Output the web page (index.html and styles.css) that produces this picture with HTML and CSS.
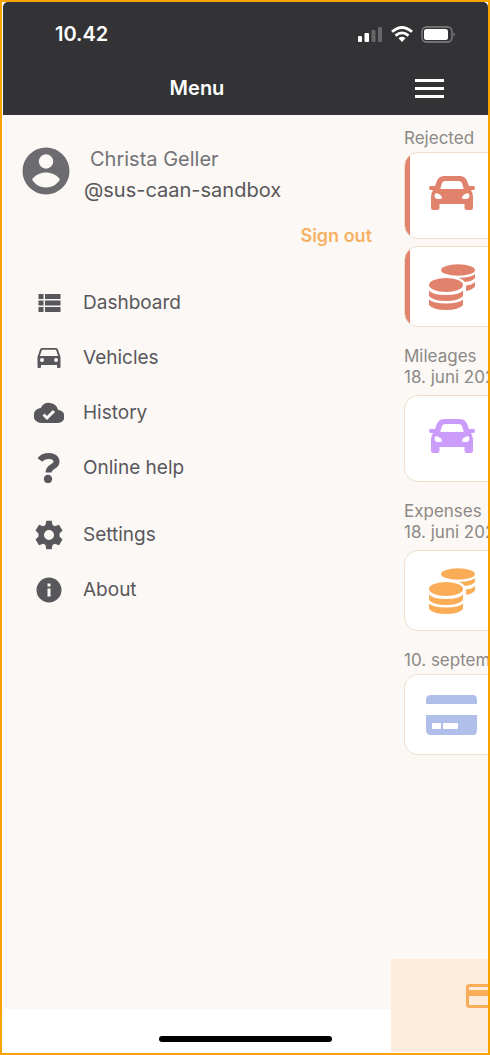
FILE: index.html
```html
<!DOCTYPE html>
<html lang="en">
<head>
<meta charset="utf-8">
<meta name="viewport" content="width=device-width, initial-scale=1">
<title>Menu</title>
<link rel="stylesheet" href="styles.css">
</head>
<body>
<svg class="sprite" aria-hidden="true">
  <symbol id="car" viewBox="0 0 46 34">
    <path fill-rule="evenodd" d="M16 0H30C35 0 37 2 38.500 6L40 10H44.500Q46 10 46 12T44.500 14H42Q44 17 44 21V31.500Q44 34 41.500 34H38Q35.500 34 35.500 31.500V28H10.500V31.500Q10.500 34 8 34H4.500Q2 34 2 31.500V21Q2 17 4 14H1.500Q0 14 0 12T1.500 10H6L7.500 6C9 2 11 0 16 0ZM17 5C14 5 13.300 6 12.500 8.500L11.300 13H34.700L33.500 8.500C32.700 6 32 5 29 5ZM6.300 17.500C5 20 5.500 22.500 8.500 23H11.500C13.500 22.500 13.300 20.500 11.500 19Q8.500 16.500 6.300 17.500ZM39.700 17.500Q37.500 16.500 34.500 19C32.700 20.500 32.500 22.500 34.500 23H37.500C40.500 22.500 41 20 39.700 17.500Z"/>
  </symbol>
  <symbol id="coins" viewBox="0 0 46 46">
    <ellipse cx="29" cy="6" rx="17" ry="5.800"/>
    <path d="M46 10V14Q43 17.500 36 18Q33.500 15 29.500 13.700Q41 14 46 10ZM46 18V22.500Q43 26 37 27V21.500Q43 21 46 18Z"/>
    <ellipse cx="17" cy="21" rx="17" ry="7"/>
    <path d="M0 26.500Q4 31 17 31T34 26.500V32Q30 37 17 37T0 32ZM0 35.500Q4 39.500 17 39.500T34 35.500V41Q30 46 17 46T0 41Z"/>
  </symbol>
</svg>
<div class="phone">
  <header class="topbar">
    <div class="status">
      <span>10.42</span>
      <svg class="signals" viewBox="0 0 98 18" aria-hidden="true">
        <g fill="#fff"><rect x="0" y="11" width="4" height="6" rx="1"/><rect x="6.500" y="8" width="4.500" height="9" rx="1"/></g>
        <g fill="#666668"><rect x="13.500" y="5" width="4" height="12" rx="1"/><rect x="20" y="2" width="4" height="15" rx="1"/></g>
        <g fill="none" stroke="#fff" stroke-width="2.800"><path d="M34 6.800Q44 -1.800 54 6.800"/><path d="M37.500 10.600Q44 5.200 50.500 10.600"/></g>
        <path fill="#fff" d="M40.500 13.200Q44 10.500 47.500 13.200L44 17Z"/>
        <rect x="64" y="2" width="30" height="15" rx="4.500" fill="none" stroke="#858587" stroke-width="1.300"/>
        <rect x="66" y="4" width="24" height="11" rx="2.500" fill="#fff"/>
        <path fill="#858587" d="M95.500 7.500Q98 9.500 95.500 11.500Z"/>
      </svg>
    </div>
    <div class="title-row">
      <h1>Menu</h1>
      <button class="burger" type="button" aria-label="Toggle menu"><i></i><i></i><i></i></button>
    </div>
  </header>
  <div class="body">
    <aside class="drawer">
      <div class="profile">
        <svg class="avatar" viewBox="0 0 48 48" aria-hidden="true"><circle cx="24" cy="24" r="23.500" fill="#6c6b70"/><circle cx="24" cy="14.500" r="7.200" fill="#fcf8f5"/><path fill="#fcf8f5" d="M10 32.500C13 28 19 25.500 24 25.500S35 28 38 32.500C35 37.500 30 40.500 24 40.500S13 37.500 10 32.500Z"/></svg>
        <div class="who"><strong>Christa Geller</strong><span>@sus-caan-sandbox</span></div>
      </div>
      <button class="signout" type="button">Sign out</button>
      <nav class="menu">
        <a href="#"><svg viewBox="0 0 30 30" aria-hidden="true"><path d="M4.500 6H9.500V11H4.500ZM11 6H26.500V11H11ZM4.500 12.500H9.500V17.500H4.500ZM11 12.500H26.500V17.500H11ZM4.500 19H9.500V24H4.500ZM11 19H26.500V24H11Z"/></svg>Dashboard</a>
        <a href="#"><svg viewBox="0 0 30 30" aria-hidden="true"><path fill-rule="evenodd" d="M8 5H22Q23.500 5 24 6.500L26.500 14V24Q26.500 25 25.500 25H24Q23 25 23 24V22H7V24Q7 25 6 25H4.500Q3.500 25 3.500 24V14L6 6.500Q6.500 5 8 5ZM8 6.800L5.800 13H24.200L22 6.800ZM8 15A2 2 0 1 0 8 19A2 2 0 1 0 8 15ZM22 15A2 2 0 1 0 22 19A2 2 0 1 0 22 15Z"/></svg>Vehicles</a>
        <a href="#"><svg viewBox="0 0 30 30" aria-hidden="true"><path d="M24.200 12A9.400 9.400 0 0 0 6.700 10A7.500 7.500 0 0 0 7.500 25H23.800A6.500 6.500 0 0 0 24.200 12Z"/><path class="knock" d="M9.500 16.500L13 20L20 13"/></svg>History</a>
        <a href="#"><svg viewBox="0 0 30 30" aria-hidden="true"><path class="hook" d="M6 7C8 4 11 3 15 3C19 3 22.500 5 22.500 8.700C22.500 14 14.500 13 14.500 19.500"/><circle cx="14" cy="26" r="4.200"/></svg>Online help</a>
        <a class="apart" href="#"><svg viewBox="0 0 30 30" aria-hidden="true"><path fill-rule="evenodd" d="M12.300 .8H17.700L18.500 5L20.800 6.300L25 4.800L28.500 10.500L25.500 13.500V16.500L28.500 19.500L25 25.200L20.800 23.700L18.500 25L17.700 29.200H12.300L11.500 25L9.200 23.700L5 25.200L1.500 19.500L4.500 16.500V13.500L1.500 10.500L5 4.800L9.200 6.300L11.500 5ZM15 10A5 5 0 1 0 15 20A5 5 0 1 0 15 10Z"/></svg>Settings</a>
        <a href="#"><svg viewBox="0 0 30 30" aria-hidden="true"><path fill-rule="evenodd" d="M15 2.500A12.500 12.500 0 1 0 15 27.500A12.500 12.500 0 1 0 15 2.500ZM13.500 8.500H16.500V11.500H13.500ZM13.500 13.500H16.500V21.500H13.500Z"/></svg>About</a>
      </nav>
    </aside>
    <main class="feed">
      <section class="single">
        <h2>Rejected</h2>
        <article class="card tall rejected"><svg class="car"><use href="#car"/></svg></article>
        <article class="card rejected"><svg class="coins"><use href="#coins"/></svg></article>
      </section>
      <section>
        <h2>Mileages<br>18. juni 2024</h2>
        <article class="card tall mileage"><svg class="car"><use href="#car"/></svg></article>
      </section>
      <section>
        <h2>Expenses<br>18. juni 2024</h2>
        <article class="card expense"><svg class="coins"><use href="#coins"/></svg></article>
      </section>
      <section class="single">
        <h2>10. september</h2>
        <article class="card payment"><svg class="bankcard" viewBox="0 0 52 40"><path fill-rule="evenodd" d="M5 0H47Q51 0 51 5V9H0V5Q0 0 5 0ZM0 20H51V35Q51 40 47 40H5Q0 40 0 35ZM7 28Q6 28 6 29V33Q6 34 7 34H14Q15 34 15 33V29Q15 28 14 28ZM18 28Q17 28 17 29V33Q17 34 18 34H31Q32 34 32 33V29Q32 28 31 28Z"/></svg></article>
      </section>
    </main>
  </div>
  <footer class="bottom">
    <div class="tabs"><button type="button" aria-label="Cards"><svg viewBox="0 0 30 24" aria-hidden="true"><rect x="1.500" y="1.500" width="27" height="21" rx="2" fill="none" stroke="#f9ad58" stroke-width="3"/><path fill="#f9ad58" d="M2 6H28V12H2Z"/></svg></button></div>
    <div class="home"></div>
  </footer>
</div>
</body>
</html>
```
FILE: styles.css
```css
* { box-sizing: border-box; }
body { margin: 0; font-family: Inter, "Liberation Sans", sans-serif; }
h1, h2 { margin: 0; }
button { border: 0; padding: 0; background: none; font: inherit; cursor: pointer; }
.sprite { position: absolute; width: 0; height: 0; }
.phone {
  min-height: 100vh;
  display: flex;
  flex-direction: column;
  position: relative;
  overflow: hidden;
  border: 2px solid #f8a300;
  padding-left: 1px;
  background: #fff;
}
.topbar { background: #333335; color: #fff; border-radius: 5px 5px 0 0; padding-top: 18px; }
.status {
  height: 28px;
  padding: 0 32px 0 52px;
  display: flex;
  align-items: center;
  justify-content: space-between;
  font-size: 20px;
  font-weight: 600;
}
.signals { width: 98px; height: 18px; }
.title-row { height: 67px; padding-top: 13px; display: flex; align-items: center; position: relative; }
h1 { width: 80%; text-align: center; font-size: 20px; font-weight: 600; }
.burger { width: 29px; margin: 0 44px 0 auto; display: grid; gap: 5px; }
.burger i { height: 3px; background: #fff; }
.body { flex: 1; display: flex; overflow: hidden; background: #fcf8f5; }
.drawer { width: 80%; flex: none; padding: 29px 19px 0; display: flex; flex-direction: column; }
.profile { display: flex; gap: 14px; align-items: flex-start; }
.avatar { width: 48px; height: 48px; margin-top: 3px; }
.who { display: grid; line-height: 31px; font-size: 20px; color: #58575b; }
.who strong { padding-left: 6px; font-weight: 400; color: #737277; }
.signout { align-self: flex-end; margin-top: 17px; line-height: 26px; font-size: 18px; font-weight: 600; color: #f5b262; }
.menu { margin: 26px 12px 0; display: grid; }
.menu a { height: 55px; display: flex; align-items: center; gap: 19px; font-size: 19px; color: #58575b; text-decoration: none; }
.menu svg { width: 30px; height: 30px; fill: #58575b; }
.menu .knock { fill: none; stroke: #fcf8f5; stroke-width: 3; }
.menu .hook { fill: none; stroke: #58575b; stroke-width: 6; }
.menu .apart { margin-top: 12px; }
.feed { flex: none; width: 100%; padding: 13px; display: flex; flex-direction: column; gap: 19px; }
.feed section { display: grid; gap: 7px; }
.feed .single h2 { margin-bottom: -4px; }
.feed h2 { font-size: 17px; line-height: 21px; font-weight: 400; color: #8b8986; }
.card { height: 81px; padding-left: 24px; display: flex; align-items: center; background: #fff; border: 1px solid #f1dfca; border-radius: 14px; overflow: hidden; }
.tall { height: 87px; padding-bottom: 5px; }
.rejected { background: linear-gradient(to right, #e1836c 5px, #fff 5px); fill: #e1836c; }
.mileage { fill: #cb9cfb; }
.expense { fill: #faac57; }
.payment { padding-left: 21px; fill: #b0beea; }
.car { width: 46px; height: 34px; }
.coins { width: 46px; height: 46px; }
.bankcard { width: 52px; height: 40px; }
.bottom { height: 44px; display: flex; align-items: flex-end; justify-content: center; background: #fff; }
.home { width: 173px; height: 6px; margin-bottom: 11px; border-radius: 3px; background: #000; }
.tabs { position: absolute; right: 0; bottom: 1px; width: 20%; height: 93px; overflow: hidden; padding: 25px 0 0 75px; background: #fdebdc; }
.tabs svg { width: 30px; height: 24px; display: block; }
```
